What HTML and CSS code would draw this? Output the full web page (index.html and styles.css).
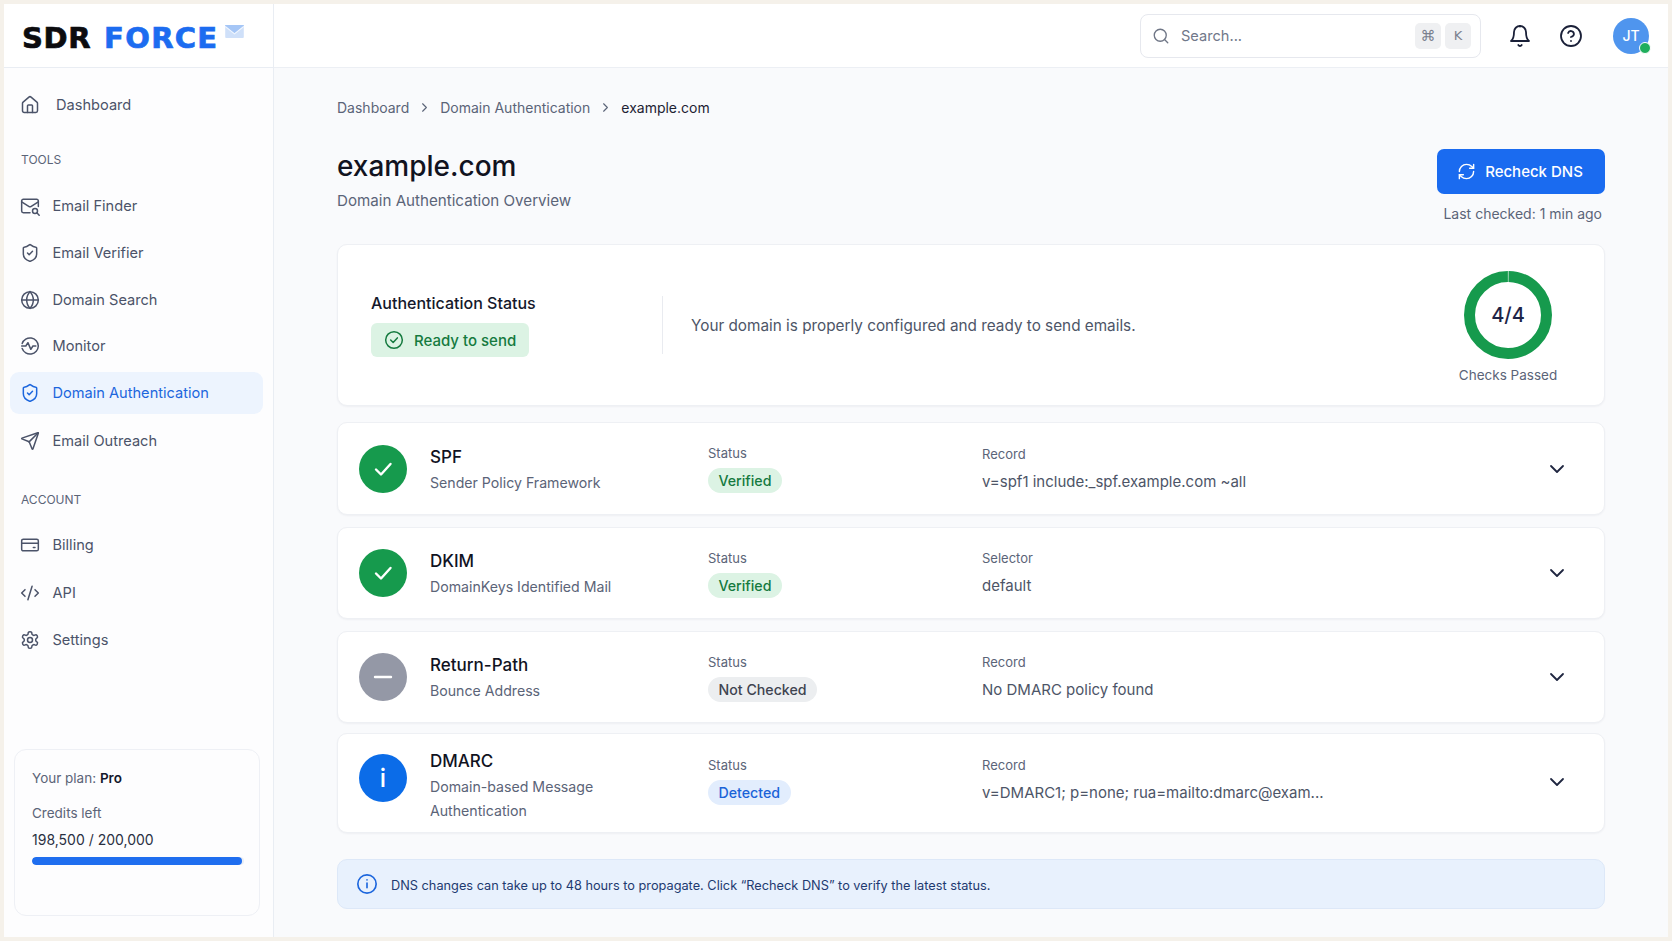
FILE: index.html
```html
<!DOCTYPE html>
<html lang="en">
<head>
<meta charset="utf-8">
<title>SDR Force – Domain Authentication</title>
<link rel="stylesheet" href="styles.css">
</head>
<body>
<svg class="defs" aria-hidden="true">
  <symbol id="i-home" viewBox="0 0 24 24"><path d="M15 21v-8a1 1 0 0 0-1-1h-4a1 1 0 0 0-1 1v8"/><path d="M3 10a2 2 0 0 1 .709-1.528l7-5.999a2 2 0 0 1 2.582 0l7 5.999A2 2 0 0 1 21 10v9a2 2 0 0 1-2 2H5a2 2 0 0 1-2-2z"/></symbol>
  <symbol id="i-mailsearch" viewBox="0 0 24 24"><path d="M22 12.5V6a2 2 0 0 0-2-2H4a2 2 0 0 0-2 2v12c0 1.1.9 2 2 2h8"/><path d="m22 7-8.97 5.7a1.94 1.94 0 0 1-2.06 0L2 7"/><circle cx="18" cy="18" r="3"/><path d="m23 23-2.5-2.5"/></symbol>
  <symbol id="i-shield" viewBox="0 0 24 24"><path d="M20 13c0 5-3.5 7.5-7.66 8.95a1 1 0 0 1-.67-.01C7.5 20.5 4 18 4 13V6a1 1 0 0 1 1-1c2 0 4.5-1.2 6.24-2.72a1.17 1.17 0 0 1 1.52 0C14.51 3.81 17 5 19 5a1 1 0 0 1 1 1z"/><path d="m9 12 2 2 4-4"/></symbol>
  <symbol id="i-globe" viewBox="0 0 24 24"><circle cx="12" cy="12" r="10"/><path d="M12 2a14.5 14.5 0 0 0 0 20 14.5 14.5 0 0 0 0-20"/><path d="M2 12h20"/></symbol>
  <symbol id="i-monitor" viewBox="0 0 24 24"><path d="M2.6 9A10 10 0 0 1 22 12a10 10 0 0 1-19.4 3"/><path d="M2 12h5l2.5-4 3.5 8 2.5-4H19"/></symbol>
  <symbol id="i-send" viewBox="0 0 24 24"><path d="M14.536 21.686a.5.5 0 0 0 .937-.024l6.5-19a.496.496 0 0 0-.635-.635l-19 6.5a.5.5 0 0 0-.024.937l7.93 3.18a2 2 0 0 1 1.112 1.11z"/><path d="m21.854 2.147-10.94 10.939"/></symbol>
  <symbol id="i-card" viewBox="0 0 24 24"><rect x="2" y="5" width="20" height="14" rx="2"/><path d="M2 10h20"/><path d="M16 15h2"/></symbol>
  <symbol id="i-code" viewBox="0 0 24 24"><path d="m18 16 4-4-4-4"/><path d="m6 8-4 4 4 4"/><path d="m14.5 4-5 16"/></symbol>
  <symbol id="i-gear" viewBox="0 0 24 24"><path d="M12.22 2h-.44a2 2 0 0 0-2 2v.18a2 2 0 0 1-1 1.73l-.43.25a2 2 0 0 1-2 0l-.15-.08a2 2 0 0 0-2.73.73l-.22.38a2 2 0 0 0 .73 2.73l.15.1a2 2 0 0 1 1 1.72v.51a2 2 0 0 1-1 1.74l-.15.09a2 2 0 0 0-.73 2.73l.22.38a2 2 0 0 0 2.73.73l.15-.08a2 2 0 0 1 2 0l.43.25a2 2 0 0 1 1 1.73V20a2 2 0 0 0 2 2h.44a2 2 0 0 0 2-2v-.18a2 2 0 0 1 1-1.73l.43-.25a2 2 0 0 1 2 0l.15.08a2 2 0 0 0 2.73-.73l.22-.39a2 2 0 0 0-.73-2.73l-.15-.08a2 2 0 0 1-1-1.74v-.5a2 2 0 0 1 1-1.74l.15-.09a2 2 0 0 0 .73-2.73l-.22-.38a2 2 0 0 0-2.73-.73l-.15.08a2 2 0 0 1-2 0l-.43-.25a2 2 0 0 1-1-1.73V4a2 2 0 0 0-2-2z"/><circle cx="12" cy="12" r="3"/></symbol>
  <symbol id="i-search" viewBox="0 0 24 24"><circle cx="11" cy="11" r="8"/><path d="m21 21-4.3-4.3"/></symbol>
  <symbol id="i-bell" viewBox="0 0 24 24"><path d="M6 8a6 6 0 0 1 12 0c0 7 3 9 3 9H3s3-2 3-9"/><path d="M10.3 21a1.94 1.94 0 0 0 3.4 0"/><path d="M12 2v.5"/></symbol>
  <symbol id="i-help" viewBox="0 0 24 24"><circle cx="12" cy="12" r="10"/><path d="M9.09 9a3 3 0 0 1 5.83 1c0 2-3 3-3 3"/><path d="M12 17h.01"/></symbol>
  <symbol id="i-refresh" viewBox="0 0 24 24"><path d="M3 12a9 9 0 0 1 9-9 9.75 9.75 0 0 1 6.74 2.74L21 8"/><path d="M21 3v5h-5"/><path d="M21 12a9 9 0 0 1-9 9 9.75 9.75 0 0 1-6.74-2.74L3 16"/><path d="M8 16H3v5"/></symbol>
  <symbol id="i-chev" viewBox="0 0 24 24"><path d="m6 9 6 6 6-6"/></symbol>
  <symbol id="i-right" viewBox="0 0 24 24"><path d="m9 18 6-6-6-6"/></symbol>
  <symbol id="i-checkcircle" viewBox="0 0 24 24"><circle cx="12" cy="12" r="10"/><path d="m8 12 3 3 5-5.5"/></symbol>
  <symbol id="i-check" viewBox="0 0 24 24"><path d="M5 12.5 10 17.5 19.5 7"/></symbol>
  <symbol id="i-minus" viewBox="0 0 24 24"><path d="M4 12h16"/></symbol>
  <symbol id="i-info" viewBox="0 0 24 24"><circle cx="12" cy="12" r="10"/><path d="M12 16v-5"/><path d="M12 7.5h.01"/></symbol>
</svg>

<div class="frame">
  <aside class="sidebar">
    <div class="logo">
      <span class="logo-sdr">SDR</span>
      <span class="logo-force">FORCE</span>
      <svg class="logo-mail" viewBox="0 0 20 14"><rect width="20" height="14" rx="1" fill="#cfe0f9"/><path d="M0 1 10 9 20 1V0H0z" fill="#a5c6f6"/><path d="M0 1.5 10 9.5 20 1.5" fill="none" stroke="#f0f6fe" stroke-width="1.2"/></svg>
    </div>
    <nav class="nav">
      <a class="nav-item nav-item-wide"><svg class="ico"><use href="#i-home"/></svg>Dashboard</a>
      <div class="nav-label nav-label-tools">TOOLS</div>
      <a class="nav-item"><svg class="ico"><use href="#i-mailsearch"/></svg>Email Finder</a>
      <a class="nav-item"><svg class="ico"><use href="#i-shield"/></svg>Email Verifier</a>
      <a class="nav-item"><svg class="ico"><use href="#i-globe"/></svg>Domain Search</a>
      <a class="nav-item"><svg class="ico"><use href="#i-monitor"/></svg>Monitor</a>
      <a class="nav-item nav-item-active"><svg class="ico"><use href="#i-shield"/></svg>Domain Authentication</a>
      <a class="nav-item nav-item-push"><svg class="ico"><use href="#i-send"/></svg>Email Outreach</a>
      <div class="nav-label nav-label-account">ACCOUNT</div>
      <a class="nav-item"><svg class="ico"><use href="#i-card"/></svg>Billing</a>
      <a class="nav-item nav-item-push"><svg class="ico"><use href="#i-code"/></svg>API</a>
      <a class="nav-item"><svg class="ico"><use href="#i-gear"/></svg>Settings</a>
    </nav>
    <div class="plan">
      <div class="plan-name">Your plan: <b>Pro</b></div>
      <div class="plan-credits">Credits left</div>
      <div class="plan-count">198,500 / 200,000</div>
      <div class="plan-track"><div class="plan-fill" style="width:99.25%"></div></div>
    </div>
  </aside>

  <div class="main">
    <header class="topbar">
      <div class="search">
        <svg class="ico search-ico"><use href="#i-search"/></svg>
        <span class="search-text">Search...</span>
        <kbd class="key key-cmd">⌘</kbd>
        <kbd class="key">K</kbd>
      </div>
      <svg class="ico top-ico"><use href="#i-bell"/></svg>
      <svg class="ico top-ico"><use href="#i-help"/></svg>
      <div class="avatar">JT<span class="avatar-dot"></span></div>
    </header>

    <main class="content">
      <div class="crumbs">
        <span>Dashboard</span>
        <svg class="ico crumb-sep"><use href="#i-right"/></svg>
        <span>Domain Authentication</span>
        <svg class="ico crumb-sep"><use href="#i-right"/></svg>
        <span class="crumb-current">example.com</span>
      </div>

      <div class="page-head">
        <div>
          <h1 class="title">example.com</h1>
          <p class="subtitle">Domain Authentication Overview</p>
        </div>
        <div class="head-actions">
          <button class="btn"><svg class="ico btn-ico"><use href="#i-refresh"/></svg>Recheck DNS</button>
          <div class="last-checked">Last checked: 1 min ago</div>
        </div>
      </div>

      <section class="card status-card">
        <div class="status-left">
          <div class="status-title">Authentication Status</div>
          <div class="ready"><svg class="ico ready-ico"><use href="#i-checkcircle"/></svg>Ready to send</div>
        </div>
        <div class="status-divider"></div>
        <div class="status-text">Your domain is properly configured and ready to send emails.</div>
        <div class="ring-col">
          <div class="ring">
            <svg viewBox="0 0 88 88" class="ring-svg"><circle cx="44" cy="44" r="38.5" class="ring-arc"/></svg>
            <span class="ring-label">4/4</span>
          </div>
          <div class="ring-caption">Checks Passed</div>
        </div>
      </section>

      <section class="card row row-spf">
        <div class="badge badge-green"><svg class="ico badge-ico"><use href="#i-check"/></svg></div>
        <div class="row-name"><div class="name">SPF</div><div class="desc">Sender Policy Framework</div></div>
        <div class="row-status"><div class="field">Status</div><span class="pill pill-green">Verified</span></div>
        <div class="row-record"><div class="field">Record</div><div class="value">v=spf1 include:_spf.example.com ~all</div></div>
        <svg class="ico chev"><use href="#i-chev"/></svg>
      </section>

      <section class="card row row-dkim">
        <div class="badge badge-green"><svg class="ico badge-ico"><use href="#i-check"/></svg></div>
        <div class="row-name"><div class="name">DKIM</div><div class="desc">DomainKeys Identified Mail</div></div>
        <div class="row-status"><div class="field">Status</div><span class="pill pill-green">Verified</span></div>
        <div class="row-record"><div class="field">Selector</div><div class="value">default</div></div>
        <svg class="ico chev"><use href="#i-chev"/></svg>
      </section>

      <section class="card row row-return">
        <div class="badge badge-grey"><svg class="ico badge-ico"><use href="#i-minus"/></svg></div>
        <div class="row-name"><div class="name">Return-Path</div><div class="desc">Bounce Address</div></div>
        <div class="row-status"><div class="field">Status</div><span class="pill pill-grey">Not Checked</span></div>
        <div class="row-record"><div class="field">Record</div><div class="value">No DMARC policy found</div></div>
        <svg class="ico chev"><use href="#i-chev"/></svg>
      </section>

      <section class="card row row-dmarc">
        <div class="badge badge-blue"><span class="badge-i">i</span></div>
        <div class="row-name"><div class="name">DMARC</div><div class="desc">Domain-based Message Authentication</div></div>
        <div class="row-status"><div class="field">Status</div><span class="pill pill-blue">Detected</span></div>
        <div class="row-record"><div class="field">Record</div><div class="value">v=DMARC1; p=none; rua=mailto:dmarc@exam...</div></div>
        <svg class="ico chev"><use href="#i-chev"/></svg>
      </section>

      <div class="notice">
        <svg class="ico notice-ico"><use href="#i-info"/></svg>
        <span>DNS changes can take up to 48 hours to propagate. Click “Recheck DNS” to verify the latest status.</span>
      </div>
    </main>
  </div>
</div>
</body>
</html>
```

FILE: styles.css
```css
* { box-sizing: border-box; }
html, body { margin: 0; height: 100%; }
body {
  font-family: "Inter", "Liberation Sans", sans-serif;
  background: #f5f1ea;
  color: #111827;
  overflow: hidden;
}
.defs { display: none; }
.ico {
  fill: none;
  stroke: currentColor;
  stroke-width: 1.8;
  stroke-linecap: round;
  stroke-linejoin: round;
  flex: none;
  width: 20px;
  height: 20px;
}

.frame {
  display: flex;
  width: 1672px;
  height: 941px;
  padding: 4px;
}

/* Sidebar */
.sidebar {
  width: 270px;
  flex: none;
  display: flex;
  flex-direction: column;
  background: #fdfdfe;
  border-right: 1px solid #e9edf3;
}
.logo {
  height: 64px;
  flex: none;
  display: flex;
  align-items: center;
  gap: 13px;
  padding: 4px 0 0 18px;
  background: #fff;
  border-bottom: 1px solid #e9edf3;
  font-family: "DejaVu Sans", "Inter", sans-serif;
  font-size: 29px;
  font-weight: 700;
  -webkit-text-stroke: .7px currentColor;
}
.logo-sdr { color: #0c0c0f; letter-spacing: .6px; }
.logo-force { color: #1c6cf0; letter-spacing: 1.3px; }
.logo-mail { width: 19px; height: 13px; margin: -13px 0 0 -6px; }

.nav {
  display: flex;
  flex-direction: column;
  padding: 16px 10px 0 6px;
  gap: 4.7px;
}
.nav-item {
  display: flex;
  align-items: center;
  gap: 12.5px;
  height: 42px;
  padding-left: 10px;
  border-radius: 9px;
  color: #4b5369;
  font-size: 14.6px;
}
.nav-item-wide { gap: 16px; }
.nav-item-push { margin-top: 1px; }
.nav-item-active { background: #edf4fe; color: #1c66dd; }
.nav-label {
  font-size: 12px;
  line-height: 16px;
  color: #5b6478;
  padding-left: 11px;
}
.nav-label-tools { margin: 21px 0 13px; }
.nav-label-account { margin: 25px 0 12px; }

.plan {
  margin: auto 0 21px 10px;
  width: 246px;
  height: 167px;
  padding: 19px 15px 0 17px;
  border: 1px solid #eef0f5;
  border-radius: 12px;
  background: #fdfdfe;
  font-size: 13.5px;
  color: #5b6478;
}
.plan-name { line-height: 18px; }
.plan-name b { color: #14182b; font-weight: 600; }
.plan-credits { line-height: 18px; margin-top: 17px; }
.plan-count { line-height: 20px; margin-top: 8px; color: #2a3042; font-size: 14px; }
.plan-track { height: 8px; margin-top: 7px; border-radius: 4px; background: #e8edf5; overflow: hidden; }
.plan-fill { height: 100%; border-radius: 4px; background: #1f6eef; }

/* Main */
.main {
  flex: 1;
  min-width: 0;
  display: flex;
  flex-direction: column;
  background: #f9fafc;
}
.topbar {
  height: 64px;
  flex: none;
  display: flex;
  align-items: center;
  justify-content: flex-end;
  gap: 27px;
  padding: 0 19px 5px 0;
  background: #fff;
  border-bottom: 1px solid #eceff4;
}
.search {
  width: 341px;
  height: 44px;
  display: flex;
  align-items: center;
  padding: 0 9px 0 11px;
  border: 1px solid #e6e8ee;
  border-radius: 8px;
  background: #fff;
  margin-top: 5px;
}
.search-ico { width: 18px; height: 18px; color: #6f7686; }
.search-text { flex: 1; margin-left: 11px; font-size: 14.6px; color: #71788a; }
.key {
  display: flex;
  align-items: center;
  justify-content: center;
  width: 26px;
  height: 26px;
  margin-left: 4px;
  border-radius: 5px;
  background: #eff0f2;
  color: #7a808e;
  font-family: "DejaVu Sans", "Inter", sans-serif;
  font-size: 13px;
}
.key-cmd { font-size: 15px; }
.top-ico { width: 24px; height: 24px; color: #1a2038; margin-top: 5px; }
.avatar {
  position: relative;
  width: 36px;
  height: 36px;
  margin: 5px 0 0 3px;
  border-radius: 50%;
  background: #4f95ee;
  color: #fff;
  font-size: 14px;
  font-weight: 500;
  display: flex;
  align-items: center;
  justify-content: center;
}
.avatar-dot {
  position: absolute;
  right: -2px;
  bottom: 0;
  width: 12px;
  height: 12px;
  border-radius: 50%;
  background: #1fae5c;
  border: 1.5px solid #fff;
}

.content { padding: 29px 63px 0 63px; }
.crumbs {
  display: flex;
  align-items: center;
  height: 20px;
  font-size: 14px;
  color: #5b6478;
}
.crumb-sep { width: 15px; height: 15px; margin: 0 8px; color: #5b6478; }
.crumb-current { color: #1d2233; }

.page-head {
  display: flex;
  justify-content: space-between;
  margin: 32px 0 21px;
}
.title {
  margin: -1px 0 0;
  font-size: 28px;
  line-height: 36px;
  font-weight: 500;
  color: #11131f;
}
.subtitle {
  margin: 7px 0 0;
  font-size: 15.15px;
  line-height: 20px;
  color: #5b6478;
}
.head-actions { display: flex; flex-direction: column; align-items: flex-end; }
.btn {
  display: flex;
  align-items: center;
  justify-content: center;
  gap: 9px;
  width: 168px;
  height: 45px;
  border: 0;
  border-radius: 7px;
  background: #1a6bf0;
  color: #fff;
  font: 500 15px "Inter", "Liberation Sans", sans-serif;
}
.btn-ico { width: 19px; height: 19px; margin-left: -2px; }
.last-checked {
  margin: 11px 3px 0 0;
  font-size: 14px;
  line-height: 18px;
  color: #5b6478;
}

.card {
  background: #fff;
  border: 1px solid #eef0f4;
  border-radius: 10px;
  box-shadow: 0 1px 2px rgba(30, 40, 70, .05);
}
.status-card {
  height: 162px;
  display: flex;
  align-items: center;
  padding: 0 36px 0 33px;
}
.status-left { width: 291px; flex: none; }
.status-title { font-size: 16px; line-height: 22px; font-weight: 500; color: #14182b; margin-top: -1px; }
.ready {
  display: flex;
  align-items: center;
  gap: 10px;
  width: 158px;
  height: 34px;
  margin-top: 9px;
  padding-left: 13px;
  border-radius: 6px;
  background: #dcf3e4;
  color: #157a3f;
  font-size: 15px;
  font-weight: 500;
}
.status-divider { width: 1px; height: 58px; flex: none; margin-right: 28px; background: #e9ebf0; }
.status-text { flex: 1; font-size: 15.3px; color: #4d5567; }
.ring-col { width: 120px; flex: none; text-align: center; margin-top: 6px; }
.ring { position: relative; width: 88px; height: 88px; margin: 0 auto; }
.ring-svg { display: block; width: 88px; height: 88px; transform: rotate(-90deg); }
.ring-arc { fill: none; stroke: #169a4d; stroke-width: 11; stroke-dasharray: 240.9 1; stroke-dashoffset: -.5; }
.ring-label {
  position: absolute;
  inset: 0;
  display: flex;
  align-items: center;
  justify-content: center;
  font-size: 20px;
  font-weight: 500;
  color: #1e2447;
}
.ring-caption { margin-top: 6px; font-size: 13.5px; line-height: 20px; color: #5b6478; white-space: nowrap; }

.row {
  display: flex;
  align-items: center;
  padding: 0 35px 0 21px;
}
.row-spf { height: 93px; margin-top: 16px; }
.row-dkim { height: 92px; margin-top: 12px; }
.row-return { height: 92px; margin-top: 12px; }
.row-dmarc { height: 100px; margin-top: 10px; }
.badge {
  width: 48px;
  height: 48px;
  flex: none;
  margin-right: 23px;
  border-radius: 50%;
  color: #fff;
  display: flex;
  align-items: center;
  justify-content: center;
}
.badge-green { background: #169a4d; }
.badge-grey { background: #9498a6; }
.badge-blue { background: #0b6ce8; }
.badge-ico { width: 24px; height: 24px; stroke-width: 2.4; }
.badge-i { font-size: 25px; font-weight: 500; line-height: 1; }
.row-name { width: 240px; flex: none; margin-right: 38px; padding-top: 3px; }
.row-dkim .row-name, .row-return .row-name { padding-top: 2px; }
.row-return .row-name { margin-top: -1px; }
.name { font-size: 17px; line-height: 24px; font-weight: 500; color: #11131f; }
.desc { margin-top: 2px; font-size: 14.15px; line-height: 23.5px; color: #5b6478; }
.row-status { width: 274px; flex: none; }
.row-record { flex: 1; min-width: 0; }
.field { font-size: 13px; line-height: 18px; color: #5b6478; }
.value { margin-top: 8px; font-size: 15px; line-height: 22px; color: #4d5567; white-space: nowrap; }
.pill {
  display: inline-block;
  height: 25px;
  margin-top: 6px;
  padding: 0 10.5px;
  border-radius: 13px;
  font-size: 14.2px;
  line-height: 25px;
  font-weight: 500;
  vertical-align: top;
}
.pill-green { background: #dcf3e4; color: #157a3f; }
.pill-grey { background: #eceef0; color: #3f4450; }
.pill-blue { background: #e2edfd; color: #1a63d8; }
.chev { width: 24px; height: 24px; color: #1f2640; }
.row-dmarc .badge { margin-bottom: 10px; }
.row-dmarc .row-status,
.row-dmarc .row-record { margin-bottom: 6px; }
.row-dmarc .row-name { padding-top: 5px; }
.row-dmarc .chev { margin-bottom: 2px; }

.notice {
  display: flex;
  align-items: center;
  gap: 13px;
  height: 50px;
  margin-top: 26px;
  padding: 0 0 0 18px;
  background: #e8f1fd;
  border: 1px solid #dde8f8;
  border-radius: 10px;
  color: #1e3a70;
  font-size: 12.75px;
}
.notice-ico { width: 22px; height: 22px; color: #1c66dd; }
.notice span { padding-top: 2px; }
```
